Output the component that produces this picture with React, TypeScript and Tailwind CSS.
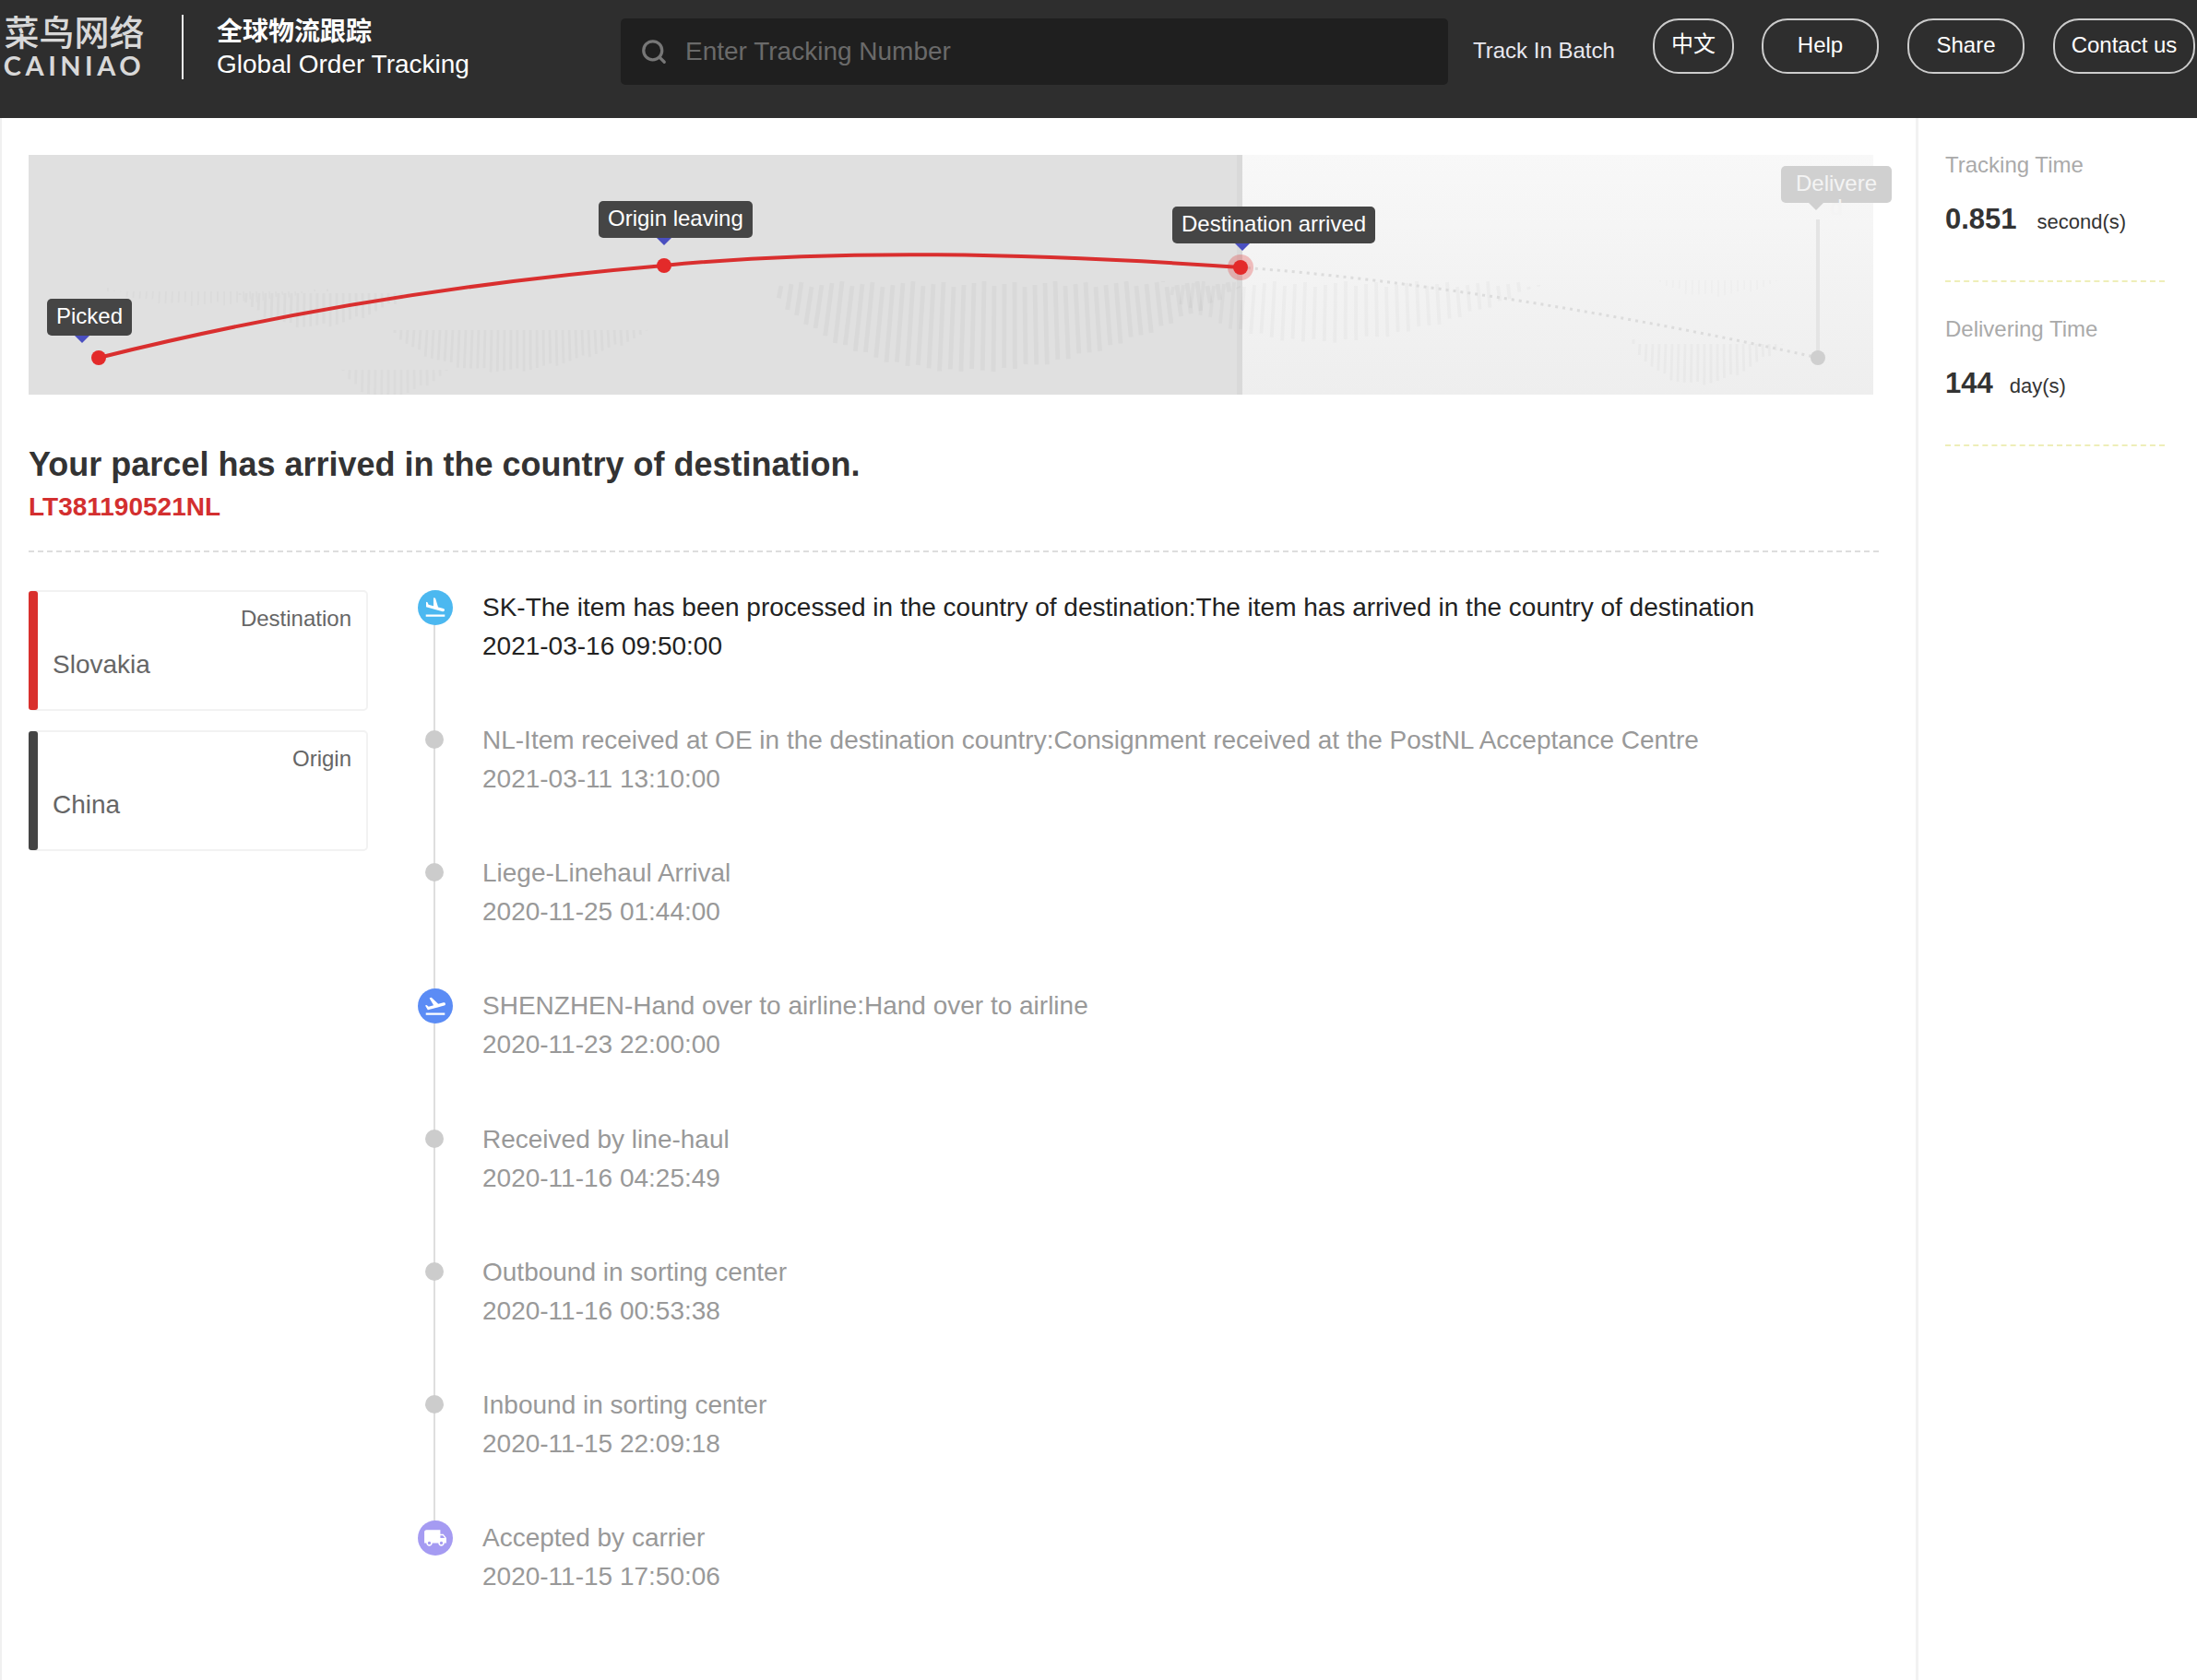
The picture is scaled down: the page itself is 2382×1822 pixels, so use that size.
import { MdFlightLand, MdFlightTakeoff, MdLocalShipping } from "react-icons/md";
import { Search } from "lucide-react";
import type { ReactNode } from "react";

const SANS = "font-['Liberation_Sans','Noto_Sans_CJK_SC',sans-serif]";

interface TrackEvent {
  text: string;
  time: string;
  icon?: ReactNode;
  color?: string;
}

const events: TrackEvent[] = [
  {
    text: "SK-The item has been processed in the country of destination:The item has arrived in the country of destination",
    time: "2021-03-16 09:50:00",
    icon: <MdFlightLand className="text-[26px] text-white" />,
    color: "bg-[#4cb8f0]",
  },
  {
    text: "NL-Item received at OE in the destination country:Consignment received at the PostNL Acceptance Centre",
    time: "2021-03-11 13:10:00",
  },
  { text: "Liege-Linehaul Arrival", time: "2020-11-25 01:44:00" },
  {
    text: "SHENZHEN-Hand over to airline:Hand over to airline",
    time: "2020-11-23 22:00:00",
    icon: <MdFlightTakeoff className="text-[26px] text-white" />,
    color: "bg-[#5b8cf5]",
  },
  { text: "Received by line-haul", time: "2020-11-16 04:25:49" },
  { text: "Outbound in sorting center", time: "2020-11-16 00:53:38" },
  { text: "Inbound in sorting center", time: "2020-11-15 22:09:18" },
  {
    text: "Accepted by carrier",
    time: "2020-11-15 17:50:06",
    icon: <MdLocalShipping className="text-[26px] text-white" />,
    color: "bg-[#a59bf2]",
  },
];

// hatch blobs of the world map, in map coordinates
const blobs = [
  { x0: 86, x1: 326, y0: 142, y1: 160, step: 7, w: 2, o: 0.018 },
  { x0: 229, x1: 413, y0: 149, y1: 184, step: 7, w: 3, o: 0.022 },
  { x0: 397, x1: 673, y0: 189, y1: 232, step: 7, w: 3, o: 0.025 },
  { x0: 341, x1: 454, y0: 232, y1: 260, step: 7, w: 3, o: 0.02 },
  { x0: 805, x1: 1320, y0: 137, y1: 232, step: 11, w: 5, o: 0.028 },
  { x0: 1230, x1: 1640, y0: 137, y1: 200, step: 11, w: 4, o: 0.022 },
  { x0: 1740, x1: 1905, y0: 200, y1: 246, step: 7, w: 3, o: 0.022 },
  { x0: 1769, x1: 1900, y0: 135, y1: 150, step: 7, w: 2, o: 0.015 },
];

function hatchPath(b: (typeof blobs)[number]) {
  const cx = (b.x0 + b.x1) / 2;
  let d = "";
  for (let x = b.x0; x <= b.x1; x += b.step) {
    const t = (x - b.x0) / (b.x1 - b.x0);
    const len = (b.y1 - b.y0) * Math.pow(Math.sin(Math.PI * Math.pow(t, 0.8)), 0.9);
    const end = b.y0 + len + ((x * 7) % 5);
    d += `M${x} ${b.y0 + ((x * 3) % 7)}L${(x + (x - cx) * 0.06 * (len / 90)).toFixed(1)} ${end.toFixed(1)}`;
  }
  return d;
}

function Tip({ className, arrow, children }: { className: string; arrow: string; children: ReactNode }) {
  return (
    <div className={`absolute h-10 rounded-[5px] bg-[#454545] px-[10px] pt-[6px] text-[24px] leading-[26px] whitespace-nowrap text-white ${className}`}>
      {children}
      <span className={`absolute top-full h-0 w-0 border-x-[8px] border-t-[8px] border-x-transparent border-t-[#4a4fc0] ${arrow}`} />
    </div>
  );
}

function MapPanel() {
  return (
    <div className="relative flex h-[260px] w-[2000px]">
      <div className="w-[1316px] border-r-[6px] border-r-[#d9d9d9] bg-[#e0e0e0]" />
      <div className="flex-1 bg-gradient-to-b from-[#f8f8f8] to-[#eeeeee]" />
      <svg className="absolute top-0 left-0" width="2000" height="260" viewBox="0 0 2000 260" fill="none">
        {blobs.map((b, i) => (
          <path key={i} d={hatchPath(b)} stroke="#000" strokeOpacity={b.o} strokeWidth={b.w} />
        ))}
        <path d="M1314 122C1500 135 1740 175 1940 220" stroke="#dcdcdc" strokeWidth="3" strokeDasharray="3 5" />
        <path d="M1940 70V220" stroke="#e4e4e4" strokeWidth="4" />
        <circle cx="1940" cy="220" r="8" fill="#cfcfcf" />
        <path d="M76 220C276 170 489 137 689 120C889 100 1114 108 1314 122" stroke="#d92f2f" strokeWidth="4" />
        <circle cx="76" cy="220" r="8" fill="#e32a2a" />
        <circle cx="689" cy="120" r="8" fill="#e32a2a" />
        <circle cx="1314" cy="122" r="14" fill="#e32a2a" fillOpacity="0.28" />
        <circle cx="1314" cy="122" r="8" fill="#e32a2a" />
      </svg>
      <Tip className="top-[156px] left-[20px]" arrow="left-[30px]">Picked</Tip>
      <Tip className="top-[50px] left-[618px]" arrow="left-[63px]">Origin leaving</Tip>
      <Tip className="top-[56px] left-[1240px]" arrow="left-[68px]">Destination arrived</Tip>
      <div className="absolute top-[12px] left-[1900px] h-10 w-[120px] rounded-[5px] bg-[#d0d0d0] px-[14px] pt-[6px] text-center text-[24px] leading-[26px] break-all text-[#f4f4f4]">
        Delivered
        <span className="absolute top-full left-[30px] h-0 w-0 border-x-[8px] border-t-[8px] border-x-transparent border-t-[#d0d0d0]" />
      </div>
    </div>
  );
}

function PlaceCard({ label, place, bar }: { label: string; place: string; bar: string }) {
  return (
    <div className="relative h-[131px] w-[368px] rounded-[5px] border-2 border-[#f2f2f2] pt-[15px] pr-4 pl-[24px] text-[#666]">
      <span className={`absolute top-[-1px] bottom-[-1px] left-[-2px] w-[10px] rounded-[3px] ${bar}`} />
      <div className="text-right text-[24px] leading-[28px]">{label}</div>
      <div className="mt-[20px] text-[28px] leading-[32px]">{place}</div>
    </div>
  );
}

function Timeline() {
  return (
    <div className="flex-1">
      {events.map((ev, i) => (
        <div key={ev.time} className="relative flex h-[144.15px] pl-[70px]">
          {i < events.length - 1 && <span className="absolute top-[19px] left-[17px] h-[144px] w-[2px] bg-[#dedede]" />}
          {ev.icon ? (
            <span className={`absolute top-0 left-0 flex h-[38px] w-[38px] items-center justify-center rounded-full ${ev.color}`}>{ev.icon}</span>
          ) : (
            <span className="absolute top-[8px] left-[8px] h-5 w-5 rounded-full bg-[#cccccc]" />
          )}
          <div className={`mt-[-2px] text-[28px] leading-[42px] ${i === 0 ? "text-[#222]" : "text-[#999]"}`}>
            <div>{ev.text}</div>
            <div>{ev.time}</div>
          </div>
        </div>
      ))}
    </div>
  );
}

function Stat({ label, value, unit, gap }: { label: string; value: string; unit: string; gap: string }) {
  return (
    <div className="h-[178px] w-[238px] border-b-2 border-dashed border-b-[#eeeeb8] pt-[37px]">
      <div className="text-[24px] leading-[28px] text-[#aaa]">{label}</div>
      <div className="mt-[27px] flex items-baseline leading-[36px] text-[#333]">
        <span className="text-[31px] font-bold">{value}</span>
        <span className={`text-[22px] ${gap}`}>{unit}</span>
      </div>
    </div>
  );
}

export default function App() {
  return (
    <div className={`flex min-h-[1822px] flex-col bg-white ${SANS}`}>
      <header className="flex h-[128px] items-start bg-[#2e2e2e] text-white">
        <div className="mt-[15px] ml-[4px] flex w-[153px] flex-col items-center text-[#d8d8d8]">
          <div className="text-[38px] leading-[42px] font-medium whitespace-nowrap">菜鸟网络</div>
          <div className="font-['Lato',sans-serif] text-[29px] leading-[28px] font-bold tracking-[4.5px] whitespace-nowrap">CAINIAO</div>
        </div>
        <div className="mt-4 ml-[40px] h-[70px] w-[2px] bg-[#f0f0f0]" />
        <div className="mt-4 ml-[36px] w-[301px]">
          <div className="text-[28px] leading-[38px] font-bold">全球物流跟踪</div>
          <div className="text-[28px] leading-[32px]">Global Order Tracking</div>
        </div>
        <div className="mt-5 ml-[137px] flex h-[72px] w-[897px] items-center rounded-[5px] bg-[#1f1f1f] pb-[1px] pl-[21px] text-[#6a6a6a]">
          <Search size={30} strokeWidth={2.6} className="text-[#777]" />
          <span className="ml-[19px] text-[28px]">Enter Tracking Number</span>
        </div>
        <div className="mt-[38px] ml-[27px] w-[195px] text-[24px] leading-[34px] text-[#e8e8f0]">Track In Batch</div>
        <div className="mt-5 flex items-center text-[24px]">
          <button className="h-[60px] w-[88px] rounded-[28px] border-2 border-[#ccc] pb-[4px]">中文</button>
          <button className="ml-[30px] h-[60px] w-[127px] rounded-[28px] border-2 border-[#ccc] pb-[3px]">Help</button>
          <button className="ml-[31px] h-[60px] w-[127px] rounded-[28px] border-2 border-[#ccc] pb-[3px]">Share</button>
          <button className="ml-[31px] h-[60px] w-[154px] rounded-[28px] border-2 border-[#ccc] pb-[3px]">Contact us</button>
        </div>
      </header>
      <div className="flex flex-1">
        <main className="w-[2077px] border-l-2 border-l-[#f0f0f0] pt-[40px] pl-[29px]">
          <MapPanel />
          <h1 className="mt-[54px] text-[36px] leading-[44px] font-bold text-[#333]">Your parcel has arrived in the country of destination.</h1>
          <div className="mt-[8px] text-[28px] leading-[32px] font-bold text-[#d32f2f]">LT381190521NL</div>
          <div className="mt-[31px] w-[2006px] border-t-2 border-dashed border-t-[#dddddd]" />
          <div className="mt-[41px] flex">
            <div className="flex w-[422px] flex-col gap-[21px]">
              <PlaceCard label="Destination" place="Slovakia" bar="bg-[#d9302d]" />
              <PlaceCard label="Origin" place="China" bar="bg-[#444]" />
            </div>
            <Timeline />
          </div>
        </main>
        <aside className="flex-1 border-l-[3px] border-l-[#f2f2f2] pl-[29px]">
          <Stat label="Tracking Time" value="0.851" unit="second(s)" gap="ml-[22px]" />
          <Stat label="Delivering Time" value="144" unit="day(s)" gap="ml-[18px]" />
        </aside>
      </div>
    </div>
  );
}
